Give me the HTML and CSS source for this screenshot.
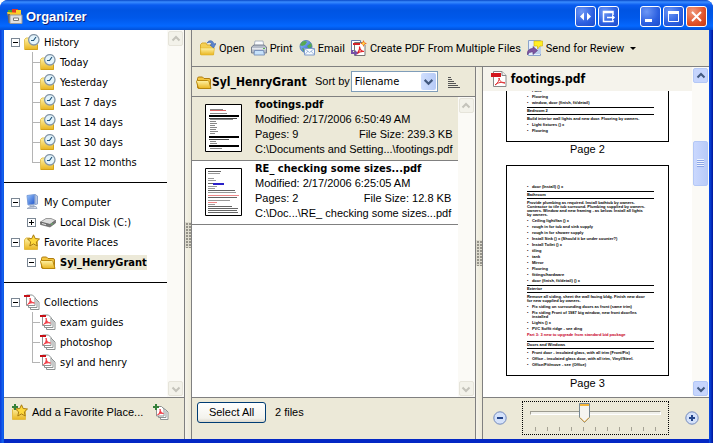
FILE: index.html
```html
<!DOCTYPE html>
<html lang="en">
<head>
<meta charset="utf-8">
<title>Organizer</title>
<link rel="stylesheet" href="styles.css">
</head>
<body>
<svg class="defs" aria-hidden="true">
  <defs>
    <linearGradient id="gold" x1="0" y1="0" x2="0" y2="1"><stop offset="0" stop-color="#fff3a6"/><stop offset="1" stop-color="#e9b520"/></linearGradient>
    <linearGradient id="blue" x1="0" y1="0" x2="1" y2="1"><stop offset="0" stop-color="#9cc8ff"/><stop offset="1" stop-color="#1c50c8"/></linearGradient>
  </defs>
  <symbol id="i-history" viewBox="0 0 16 16">
    <path d="M0.500 15.500V5.500L2 4h4l1 2h6.500v9.500z" fill="url(#gold)" stroke="#e6c455"/>
    <path d="M1 15.500h12.500V11" fill="none" stroke="#d2a21c"/>
    <circle cx="9.800" cy="5.800" r="5.200" fill="#e4f4fc" stroke="#8496a8" stroke-width="1.300"/>
    <path d="M12 3L9.500 6.500H7" fill="none" stroke="#24567c" stroke-width="1.200"/>
  </symbol>
  <symbol id="i-folder" viewBox="0 0 16 16">
    <path d="M1.500 13V4.500Q1.500 3 3 3H6.500L8 4.500H13Q14.500 4.500 14.500 6V13Q14.500 14.500 13 14.500H3Q1.500 14.500 1.500 13z" fill="#f4c63e" stroke="#b07d10"/>
    <path d="M0.500 7.500Q0.500 6.500 1.500 6.500H11.500Q12.500 6.500 13 7.500L15 14.500H4Q2.500 14.500 2 13z" fill="url(#gold)" stroke="#b8860b"/>
  </symbol>
  <symbol id="i-star" viewBox="0 0 16 16">
    <path d="M0.500 15.500V6L2 4h4l1 2h6.500v9.500z" fill="url(#gold)" stroke="#e2bb45"/>
    <path d="M9.500 0.800L11.200 4.500L15.500 5L12.300 7.900L13.200 12L9.500 9.900L5.800 12L6.700 7.900L3.500 5L7.800 4.500z" fill="#ffd93b" stroke="#a87b10"/>
  </symbol>
  <symbol id="i-staradd" viewBox="0 0 16 16">
    <use href="#i-star"/><path d="M3 0v6M0 3h6" stroke="#35803a" stroke-width="2"/>
  </symbol>
  <symbol id="i-computer" viewBox="0 0 16 16">
    <path d="M3 1.500L11 0.500V10L4 11z" fill="url(#blue)" stroke="#7b9fdb"/>
    <path d="M11 0.500L13.500 2V10L11 10.500z" fill="#b8c8e4" stroke="#8ba2cc"/>
    <path d="M6 11h4v2H6zM3 14.500L7 12.500H12L13 14.500z" fill="#dde2ec" stroke="#92a1bb" stroke-width=".8"/>
  </symbol>
  <symbol id="i-disk" viewBox="0 0 16 16">
    <path d="M0.500 8L6 4.500H11L15.500 6.500L10 10.500z" fill="#dcdcdc" stroke="#999"/>
    <path d="M0.500 8L10 10.500L15.500 6.500V9L10 13L0.500 10.500z" fill="#777" stroke="#555" stroke-width=".6"/>
    <path d="M2 9.500L6 10.700" stroke="#ddd"/><circle cx="12" cy="10" r=".8" fill="#68d168"/>
  </symbol>
  <symbol id="i-pdf" viewBox="0 0 16 16">
    <path d="M2.500 0.500H11L15 4.500V15.500H2.500z" fill="#fff" stroke="#888"/>
    <path d="M11 .500V4.500H15" fill="#eee" stroke="#888"/>
    <path d="M0 2h10v4H0z" fill="#d3161d"/>
    <path d="M4 14C7 12 8.500 9 8 7C9 11 11 12 14 12C11 10.500 7 11.500 4 14z" fill="none" stroke="#df2e31"/>
  </symbol>
  <symbol id="i-stack" viewBox="0 0 16 16">
    <path d="M6.500 5.500h6l2.500 2.500v7.500H6.500z" fill="#fff" stroke="#8d9292"/>
    <path d="M4.500 3.500h6l2.500 2.500v7.500H4.500z" fill="#fff" stroke="#8d9292"/>
    <path d="M2.500 1h6L11 3.500v8H2.500z" fill="#fff" stroke="#8d9292"/>
    <path d="M0 1h6v2H0z" fill="#c70f16"/>
    <path d="M3.500 10.500C6 8.500 6.500 6 6 4C6.500 7.500 8 8.500 10.500 9C8 8.500 5.500 9 3.500 10.500z" fill="#ef3c46" stroke="#ef3c46" stroke-width=".9"/>
  </symbol>
  <symbol id="i-stackadd" viewBox="0 0 16 16">
    <path d="M7.500 5.500h5l2.500 2.500v7.500H7.500z" fill="#fff" stroke="#8d9292"/>
    <path d="M5.500 4h5l2.500 2.500v7H5.500z" fill="#fff" stroke="#8d9292"/>
    <path d="M3.500 2.500h5l2.500 2.500v7H3.500z" fill="#fff" stroke="#8d9292"/>
    <path d="M4.500 11C7 9 7.300 7 7 5C7.500 8 8.500 9 10.500 9.500C8.500 9 6.500 9.500 4.500 11z" fill="#ef3c46" stroke="#ef3c46" stroke-width=".9"/>
    <path d="M3 0v6M0 3h6" stroke="#35803a" stroke-width="2"/>
  </symbol>
  <symbol id="i-open" viewBox="0 0 16 16">
    <path d="M0.500 14.500V4.500L2 3h4l1 2h6.500v9.500z" fill="#f4cf52" stroke="#d8ac30"/>
    <path d="M0.500 8H14.500L13.500 15H1z" fill="url(#gold)" stroke="#e1b52c" stroke-width=".6"/>
    <path d="M7 3C9-.500 13 0 14 4L16 3.500L13.500 8L10 5L12 4.500C11 2 9 2 7 3z" fill="#5c85d0" stroke="#3b62aa" stroke-width=".6"/>
  </symbol>
  <symbol id="i-print" viewBox="0 0 16 16">
    <path d="M4 1h8l1 6H3z" fill="#fafcff" stroke="#9aa4b4" stroke-width=".8"/>
    <path d="M.500 7L3 5H13L15.500 7V13H.500z" fill="#b5bcc9" stroke="#6d7687" stroke-width=".9"/>
    <path d="M1 8h14v1.500H1z" fill="#e3e7ee"/>
    <path d="M3.500 10.500h9l1 4.500H3z" fill="#c7e2fb" stroke="#6783b2" stroke-width=".8"/>
    <path d="M12 8.500h2" stroke="#59b44a"/>
  </symbol>
  <symbol id="i-email" viewBox="0 0 16 16">
    <circle cx="7" cy="6.500" r="6" fill="url(#blue)" stroke="#5c84b8"/>
    <path d="M3 2Q6 0 8 2L6 5L3 6L1 5zM8 6L12 3L13 6L10 9zM3 8L6 9L5 12z" fill="#58a951"/>
    <path d="M5.500 8.500h10v6.500H5.500z" fill="#f7fbff" stroke="#7f9ccb"/>
    <path d="M5.500 8.500l5 4l5-4M5.500 15l3.500-4M15.500 15l-3.500-4" fill="none" stroke="#8ea8d2" stroke-width=".8"/>
  </symbol>
  <symbol id="i-create" viewBox="0 0 16 16">
    <path d="M.500 .500h9v10H.500z" fill="#fff" stroke="#657bb0"/>
    <path d="M3.500 2.500h8.500l2 2.500v10.500H3.500z" fill="#fff" stroke="#777"/>
    <path d="M2 3h7v2H2z" fill="#d2242a"/>
    <path d="M5.500 14C8 11.500 9 9 8.500 6.500C9 10 11 11.500 13 11.500C10 11 8 12 5.500 14z" fill="none" stroke="#e1262b" stroke-width="1.200"/>
    <path d="M0 10h2v2h2V10l3 3l-3 3v-2H0z" fill="#7650a8"/>
    <path d="M12.500 0l1 2.300L16 3.500l-2.500 1L12.500 7l-1-2.500L9 3.500l2.500-1.200z" fill="#f26b21"/><circle cx="12.500" cy="3.500" r="1.200" fill="#ffe04a"/>
  </symbol>
  <symbol id="i-review" viewBox="0 0 16 16">
    <path d="M1.500 .500h12v15h-12z" fill="#e5eefa" stroke="#8aa3cc"/>
    <path d="M9 10L14 5V14H5z" fill="#b9cdec"/>
    <path d="M7 1h8.500v5H13l-2.500 3V6H7z" fill="#ffee24" stroke="#d9b90c" stroke-width=".7"/>
    <path d="M0 15C0 10 3 8.500 6 8.500V6.500l4.500 4L6 14.500v-2.500C3.500 12 1.500 12.500 0 15z" fill="#7d55a0" stroke="#5d3b82" stroke-width=".6"/>
  </symbol>
  <symbol id="i-app" viewBox="0 0 16 16">
    <path d="M1 1h5v5H1z" fill="#3aa13d"/><path d="M5 0h6v5H5z" fill="#e33a23"/><path d="M9 1h5v5H9z" fill="#f8d52b"/>
    <path d="M0 3l14 1-1 3H1z" fill="#ffc928"/>
    <path d="M.500 5H3V14H1.500z" fill="#666"/>
    <path d="M3 6h12v8.500H3z" fill="#dfe0e1" stroke="#999"/>
    <path d="M6.500 9h5v2.500h-5z" fill="#fff" stroke="#777"/>
  </symbol>
  <symbol id="i-up" viewBox="0 0 10 10"><path d="M1.500 6.500L5 3L8.500 6.500" fill="none" stroke="currentColor" stroke-width="2"/></symbol>
  <symbol id="i-down" viewBox="0 0 10 10"><path d="M1.500 3.500L5 7L8.500 3.500" fill="none" stroke="currentColor" stroke-width="2"/></symbol>
</svg>

<div class="window">
  <header class="titlebar">
    <svg class="icon"><use href="#i-app"/></svg>
    <h1>Organizer</h1>
    <div class="winbtns">
      <button aria-label="Dock"><svg viewBox="0 0 19 19"><path d="M8 5.500v8L4 9.500zM11 5.500v8l4-4z" fill="#fff"/></svg></button>
      <button aria-label="Detach"><svg viewBox="0 0 19 19"><path d="M14 8V4.500H4.500v10H14V13M4 5.500h10.500M8 10.500h7" fill="none" stroke="#fff" stroke-width="1.500"/><path d="M13 7.500l3 3-3 3z" fill="#fff"/></svg></button>
    </div>
    <div class="winbtns">
      <button aria-label="Minimize"><svg viewBox="0 0 19 19"><path d="M4 12h7v3H4z" fill="#fff"/></svg></button>
      <button aria-label="Maximize"><svg viewBox="0 0 19 19"><path d="M4.500 5h10v9.500h-10z" fill="none" stroke="#fff"/><path d="M4 4h11v3H4z" fill="#fff"/></svg></button>
      <button class="close" aria-label="Close"><svg viewBox="0 0 19 19"><path d="M5 5l9 9M14 5l-9 9" stroke="#fff" stroke-width="2"/></svg></button>
    </div>
  </header>

  <div class="content">
    <aside class="sidebar">
      <div class="scrollpane">
        <nav class="tree">
          <section>
            <div class="row"><button class="toggle" aria-label="Collapse History"></button><svg class="icon"><use href="#i-history"/></svg><span>History</span></div>
            <ul class="lined">
              <li class="row"><svg class="icon"><use href="#i-history"/></svg><span>Today</span></li>
              <li class="row"><svg class="icon"><use href="#i-history"/></svg><span>Yesterday</span></li>
              <li class="row"><svg class="icon"><use href="#i-history"/></svg><span>Last 7 days</span></li>
              <li class="row"><svg class="icon"><use href="#i-history"/></svg><span>Last 14 days</span></li>
              <li class="row"><svg class="icon"><use href="#i-history"/></svg><span>Last 30 days</span></li>
              <li class="row"><svg class="icon"><use href="#i-history"/></svg><span>Last 12 months</span></li>
            </ul>
          </section>
          <section>
            <div class="row"><button class="toggle" aria-label="Collapse My Computer"></button><svg class="icon"><use href="#i-computer"/></svg><span>My Computer</span></div>
            <ul>
              <li class="row"><button class="toggle plus" aria-label="Expand Local Disk"></button><svg class="icon"><use href="#i-disk"/></svg><span>Local Disk (C:)</span></li>
            </ul>
            <div class="row"><button class="toggle" aria-label="Collapse Favorite Places"></button><svg class="icon"><use href="#i-star"/></svg><span>Favorite Places</span></div>
            <ul>
              <li class="row"><button class="toggle" aria-label="Collapse Syl_HenryGrant"></button><svg class="icon"><use href="#i-folder"/></svg><span class="current">Syl_HenryGrant</span></li>
            </ul>
          </section>
          <section>
            <div class="row"><button class="toggle" aria-label="Collapse Collections"></button><svg class="icon"><use href="#i-stack"/></svg><span>Collections</span></div>
            <ul class="lined">
              <li class="row"><svg class="icon"><use href="#i-stack"/></svg><span>exam guides</span></li>
              <li class="row"><svg class="icon"><use href="#i-stack"/></svg><span>photoshop</span></li>
              <li class="row"><svg class="icon"><use href="#i-stack"/></svg><span>syl and henry</span></li>
            </ul>
          </section>
        </nav>
        <div class="scrollbar">
          <button disabled aria-label="Scroll up"><svg><use href="#i-up"/></svg></button>
          <button disabled aria-label="Scroll down"><svg><use href="#i-down"/></svg></button>
        </div>
      </div>
      <footer class="sidefoot">
        <button class="tool"><svg class="icon"><use href="#i-staradd"/></svg>Add a Favorite Place...</button>
        <button class="tool" aria-label="Add collection"><svg class="icon"><use href="#i-stackadd"/></svg></button>
      </footer>
    </aside>
    <div class="splitter"><i></i></div>

    <main class="main">
      <div class="toolbar">
        <button class="tool"><svg class="icon"><use href="#i-open"/></svg>Open</button>
        <button class="tool"><svg class="icon"><use href="#i-print"/></svg>Print</button>
        <button class="tool"><svg class="icon"><use href="#i-email"/></svg>Email</button>
        <button class="tool"><svg class="icon"><use href="#i-create"/></svg>Create PDF From Multiple Files</button>
        <button class="tool"><svg class="icon"><use href="#i-review"/></svg>Send for Review<span class="caret"></span></button>
      </div>
      <div class="panes">
        <section class="files">
          <div class="fileshead">
            <svg class="icon"><use href="#i-folder"/></svg>
            <h2>Syl_HenryGrant</h2>
            <label for="sort">Sort by</label>
            <span class="combo">
              <select id="sort"><option>Filename</option></select>
              <svg><use href="#i-down"/></svg>
            </span>
            <button class="order" aria-label="Sort order"><svg viewBox="0 0 12 12"><path d="M0 1.500h3M0 3.500h4M0 5.500h6M0 7.500h8M0 9.500h10M0 11.500h12" stroke="#555" fill="none"/></svg></button>
          </div>
          <div class="scrollpane">
            <ul class="list">
              <li class="file selected">
                <svg class="thumb" viewBox="0 0 37 48">
                  <path d="M.500 .500h36v47H.500z" fill="#fff" stroke="#000"/>
                  <path d="M5 5.500h13M5 9.500h17M5 15.500h23M5 17.500h6M5 19.500h7M5 21.500h5M5 23.500h7M5 25.500h6M5 27.500h8M5 29.500h5M5 35.500h17M5 37.500h6M5 39.500h7M5 44.500h12" stroke="#888"/>
                  <path d="M5 6.500h16" stroke="#d66"/>
                  <path d="M4 12h30M4 33h30M4 42h30" stroke="#000" stroke-width="2"/>
                  <path d="M4 14.500h28M4 35.500h20" stroke="#444"/>
                </svg>
                <div class="info">
                  <h3>footings.pdf</h3>
                  <p>Modified: 2/17/2006 6:50:49 AM</p>
                  <p class="split"><span>Pages: 9</span><span>File Size: 239.3 KB</span></p>
                  <p>C:\Documents and Setting...\footings.pdf</p>
                </div>
              </li>
              <li class="file">
                <svg class="thumb" viewBox="0 0 37 48">
                  <path d="M.500 .500h36v47H.500z" fill="#fff" stroke="#000"/>
                  <path d="M3 5.500h12M3 10.500h6M3 12.500h8M3 18.500h9M3 20.500h7M3 24.500h28M3 32.500h22M3 36.500h7" stroke="#999"/>
                  <path d="M3 3.500h13M3 15.500h9M3 22.500h27M3 29.500h29M3 38.500h24M3 40.500h30M3 42.500h29M3 44.500h30" stroke="#666"/>
                  <path d="M3 27.500h31M3 34.500h9" stroke="#e88"/>
                  <path d="M8 16h11" stroke="#2a20c8" stroke-width="2"/>
                </svg>
                <div class="info">
                  <h3>RE_ checking some sizes...pdf</h3>
                  <p>Modified: 2/17/2006 6:25:05 AM</p>
                  <p class="split"><span>Pages: 2</span><span>File Size: 12.8 KB</span></p>
                  <p>C:\Doc...\RE_ checking some sizes...pdf</p>
                </div>
              </li>
            </ul>
            <div class="scrollbar">
              <button disabled aria-label="Scroll up"><svg><use href="#i-up"/></svg></button>
              <button disabled aria-label="Scroll down"><svg><use href="#i-down"/></svg></button>
            </div>
          </div>
          <footer class="filesfoot"><button class="push">Select All</button><span>2 files</span></footer>
        </section>
        <div class="splitter"><i></i></div>
        <section class="preview">
          <div class="scrollpane">
            <div class="viewer">
              <div class="viewhead"><svg class="icon"><use href="#i-pdf"/></svg><h2>footings.pdf</h2></div>
              <div class="pages">
                <article class="page first">
                  <ul><li>Paint</li><li>Flooring</li><li>window, door (finish, fit/detail)</li></ul>
                  <h4>Bedroom 2</h4>
                  <p>Build interior wall lights and new door. Flooring by owners.</p>
                  <ul><li>Light fixtures () x</li><li>Flooring</li></ul>
                </article>
                <p class="pagelabel">Page 2</p>
                <article class="page">
                  <ul><li>door (Install) () x</li></ul>
                  <h4>Bathroom</h4>
                  <p>Provide plumbing as required. Install bathtub by owners.<br>Contractor to tile tub surround. Plumbing supplied by owners.<br>owners. Window and new framing - as below. Install all lights<br>by owners.</p>
                  <ul><li>Ceiling light/fan () x</li><li>rough in for tub and sink supply</li><li>rough in for shower supply</li><li>Install Sink () x (Should it be under counter?)</li><li>Install Toilet () x</li><li>tiling</li><li>tank</li><li>Mirror</li><li>Flooring</li><li>fittings/hardware</li><li>door (finish, fit/detail) () x</li></ul>
                  <h4>Exterior</h4>
                  <p>Remove all siding, sheet the wall facing bldg. Finish new door<br>for new supplied by owners.</p>
                  <ul><li>Fix siding on surrounding doors as front (same trim)</li><li>Fix siding Front of 1987 big window, new front door/Ins<br>installed</li><li>Lights () x</li><li>PVC Soffit ridge - see ding</li></ul>
                  <p class="red">Part 3: 3 new to upgrade from standard bid package</p>
                  <h4>Doors and Windows</h4>
                  <ul><li>Front door - insulated glass, with all trim (Front/Fix)</li><li>Office - insulated glass door, with all trim, Vinyl/Steel.</li><li>Office/Fit/move - see (Office)</li></ul>
                </article>
                <p class="pagelabel">Page 3</p>
              </div>
            </div>
            <div class="scrollbar active">
              <button aria-label="Scroll up"><svg><use href="#i-up"/></svg></button>
              <span class="grip"></span>
              <button aria-label="Scroll down"><svg><use href="#i-down"/></svg></button>
            </div>
          </div>
          <footer class="zoombar">
            <button class="round" aria-label="Zoom out"><svg viewBox="0 0 14 14"><circle cx="7" cy="7" r="6.200" fill="#d5e2fa" stroke="#7289bd"/><path d="M4 7h6" stroke="#24468c" stroke-width="2"/></svg></button>
            <div class="slider">
              <input type="range" min="0" max="10" value="4" aria-label="Thumbnail size">
              <div class="ticks"><i></i><i></i><i></i><i></i><i></i><i></i><i></i><i></i><i></i><i></i><i></i></div>
            </div>
            <button class="round" aria-label="Zoom in"><svg viewBox="0 0 14 14"><circle cx="7" cy="7" r="6.200" fill="#d5e2fa" stroke="#7289bd"/><path d="M4 7h6M7 4v6" stroke="#24468c" stroke-width="2"/></svg></button>
          </footer>
        </section>
      </div>
    </main>
  </div>
</div>
</body>
</html>
```
FILE: styles.css
```css
* { box-sizing: border-box; margin: 0; padding: 0; }

:root {
  --face: #ece9d8;
  --line: #808080;
  --tahoma: "DejaVu Sans Condensed", "DejaVu Sans", sans-serif;
  --arial: "Liberation Sans", Arial, sans-serif;
}

body { font: 11px/15px var(--arial); color: #000; background: #fff; }
button { font: inherit; color: inherit; background: none; border: 0; }
ul { list-style: none; }
.defs { position: absolute; width: 0; height: 0; }
.icon { width: 16px; height: 16px; flex: none; }

.window {
  display: flex;
  flex-direction: column;
  height: 100vh;
  border-radius: 8px 8px 0 0;
  overflow: hidden;
  background: linear-gradient(90deg, #0a38d8, #1468f0 3px, #0a4be0 4px calc(100% - 4px), #0842d8 calc(100% - 3px), #00149a);
}

.titlebar {
  display: flex;
  align-items: center;
  flex: none;
  height: 30px;
  padding: 3px 6px 0 7px;
  background: linear-gradient(#0848c8, #3a8cff 2px, #0a5cf0 5px, #0054e3 10px, #0058ea 18px, #0468ff 26px, #0150d8);
}
.titlebar h1 {
  flex: 1;
  margin-left: 3px;
  font: bold 13px/20px var(--arial);
  color: #fff;
  text-shadow: 1px 1px 0 #0a1e78;
}
.winbtns { display: flex; gap: 2px; }
.winbtns + .winbtns { margin-left: 21px; }
.winbtns button {
  width: 21px;
  height: 21px;
  border: 1px solid #fff;
  border-radius: 3px;
  background: radial-gradient(circle at 30% 25%, #6d97f5, #2b5fe0 60%, #1b4ccb);
}
.winbtns .close { background: radial-gradient(circle at 30% 25%, #f09a7c, #df5129 60%, #c63a12); }
.winbtns svg { display: block; width: 19px; height: 19px; }

.content {
  display: flex;
  flex: 1;
  min-height: 0;
  margin: 0 4px;
  border-bottom: 4px solid #0428c4;
  background: var(--face);
}
.sidebar { display: flex; flex-direction: column; width: 181px; border-right: 1px solid var(--line); }
.scrollpane { display: flex; flex: 1; min-height: 0; background: #fff; }

.tree { flex: 1; padding-top: 2px; font-family: var(--tahoma); }
.tree section { padding-bottom: 10px; }
.tree section + section { padding-top: 9px; border-top: 1px solid #000; }
.row { display: flex; align-items: center; height: 20px; padding-left: 7px; white-space: nowrap; }
.row .icon { margin-right: 4px; }
.tree ul .row { padding-left: 23px; }
.lined .row {
  background:
    linear-gradient(#b4b4b4, #b4b4b4) 28px 0 / 1px 100% no-repeat,
    linear-gradient(#b4b4b4, #b4b4b4) 28px 10px / 8px 1px no-repeat;
}
.tree .lined .row { padding-left: 36px; }
.tree .lined .row:last-child { background-size: 1px 10px, 8px 1px; }
.toggle {
  flex: none;
  width: 9px;
  height: 9px;
  margin-right: 4px;
  border: 1px solid #7b8794;
  background: linear-gradient(#000, #000) center / 5px 1px no-repeat #fff;
}
.toggle.plus {
  background:
    linear-gradient(#000, #000) center / 5px 1px no-repeat,
    linear-gradient(#000, #000) center / 1px 5px no-repeat #fff;
}
.current { font-weight: bold; background: var(--face); }

.scrollbar {
  display: flex;
  flex-direction: column;
  justify-content: space-between;
  flex: none;
  width: 17px;
  padding: 1px;
  background: #fbfaf6;
}
.scrollbar button {
  display: grid;
  place-items: center;
  width: 15px;
  height: 15px;
  border: 1px solid #e6e4da;
  border-radius: 2px;
  background: #f3f2ea;
  color: #c4c3bb;
}
.scrollbar svg { width: 10px; height: 10px; }
.scrollbar.active button, .grip { border: 1px solid #b4c8f6; background: #c6d5fd; color: #42597f; }
.scrollbar .grip {
  width: 15px;
  height: 45px;
  margin-bottom: 138px;
  border-radius: 2px;
  background:
    repeating-linear-gradient(#eef4fe 0 1px, #8ca5e6 1px 2px) center / 7px 8px no-repeat,
    linear-gradient(90deg, #cad8fe, #b9cbf8);
}

.sidefoot, .filesfoot, .zoombar { flex: none; height: 42px; border-top: 1px solid var(--line); }
.sidefoot { display: flex; justify-content: space-between; align-items: flex-start; padding: 6px 15px 0 8px; }
.tool { display: flex; align-items: center; gap: 4px; white-space: nowrap; }

.splitter {
  display: flex;
  align-items: center;
  flex: none;
  width: 7px;
  border-right: 1px solid var(--line);
  background: linear-gradient(90deg, #f4f2e8, #ece9d8);
}
.splitter i {
  width: 6px;
  height: 26px;
  background: radial-gradient(circle at 2px 2px, #96948a 0 1px, transparent 1px) 0 0 / 3px 3px, #dedbce;
}

.main { display: flex; flex-direction: column; flex: 1; min-width: 0; }
.toolbar { display: flex; align-items: center; flex: none; gap: 6px; height: 36px; padding: 0 8px; font-family: Roboto, sans-serif; }
.toolbar .tool { gap: 3px; }
.caret { border: 3px solid transparent; border-top-color: #000; border-bottom: 0; margin-left: 3px; }
.panes { display: flex; flex: 1; min-height: 0; border-top: 1px solid var(--line); }

.files { display: flex; flex-direction: column; flex: 5; min-width: 0; border-right: 1px solid var(--line); }
.fileshead { display: flex; align-items: center; flex: none; height: 30px; padding: 0 15px 0 4px; border-bottom: 1px solid var(--line); }
.fileshead h2 { flex: 1; min-width: 0; overflow: hidden; font: bold 12px/18px var(--tahoma); }
.fileshead label { margin: 0 1px 0 7px; }
.combo { display: flex; position: relative; width: 87px; }
.combo select {
  appearance: none;
  width: 100%;
  height: 21px;
  padding-left: 3px;
  border: 1px solid #7f9db9;
  border-radius: 0;
  background: #fff;
  color: #000;
  font: 11px/15px var(--tahoma);
}
.combo svg {
  position: absolute;
  top: 2px;
  right: 2px;
  width: 15px;
  height: 17px;
  padding: 2px;
  border-radius: 2px;
  background: linear-gradient(90deg, #d0dffe, #b6caf7);
  color: #42597f;
  pointer-events: none;
}
.order { width: 12px; height: 12px; margin-left: 10px; }
.order svg { display: block; width: 12px; height: 12px; }

.list { flex: 1; min-width: 0; }
.file { display: flex; gap: 13px; height: 64px; padding: 0 9px 3px 13px; border-bottom: 1px solid var(--line); }
.selected { background: var(--face); }
.thumb { flex: none; width: 37px; height: 48px; margin-top: 7px; }
.info { flex: 1; white-space: nowrap; }
.info h3 { font: bold 11px/15px var(--tahoma); }
.split { display: flex; justify-content: space-between; }
.filesfoot { display: flex; align-items: flex-start; gap: 9px; padding: 4px 5px; line-height: 21px; }
.push {
  width: 69px;
  height: 21px;
  border: 1px solid #003c74;
  border-radius: 3px;
  background: linear-gradient(#fff, #f3f2ec 80%, #dcd8cc);
  line-height: 15px;
}

.preview { display: flex; flex-direction: column; flex: 4; min-width: 0; }
.viewer { display: flex; flex-direction: column; flex: 1; min-width: 0; }
.viewhead { display: flex; align-items: center; gap: 4px; flex: none; height: 24px; padding-left: 8px; background: #f5f3ec; }
.viewhead h2 { font: bold 12px/18px var(--tahoma); }
.pages {
  display: flex;
  flex-direction: column;
  justify-content: flex-end;
  align-items: center;
  flex: 1;
  min-height: 0;
  overflow: hidden;
  padding-bottom: 6px;
}
.page {
  width: 163px;
  flex: none;
  padding: 19px 14px 6px 20px;
  border: 1px solid #000;
  background: #fff;
  font: bold 4px/4px var(--arial);
  white-space: nowrap;
}
.page.first { padding-top: 0; border-top: 0; }
.page li { padding-left: 5px; margin-bottom: 2px; text-indent: -5px; }
.page li::before { content: "•"; display: inline-block; width: 5px; text-indent: 0; font-weight: normal; }
.page h4 { margin: 1px 0 2px; padding: 1px 0; border: solid #000; border-width: 1px 0; font: inherit; }
.page p { margin-bottom: 2px; }
.page .red { margin-bottom: 4px; color: #c8001e; }
.pagelabel { flex: none; line-height: 15px; }
.pagelabel + .page { margin-top: 8px; }

.zoombar { display: flex; justify-content: space-between; align-items: flex-start; padding: 3px 10px; }
.round { width: 14px; height: 14px; margin-top: 10px; }
.round svg { display: block; }
.slider { width: 147px; height: 34px; padding: 0 7px; border: 1px dotted #000; }
.slider input { display: block; appearance: none; width: 131px; height: 22px; background: none; }
.slider input::-webkit-slider-runnable-track {
  height: 4px;
  border: 1px solid #fff;
  border-top-color: #9d9c90;
  border-left-color: #9d9c90;
  background: #f0f0ea;
}
.slider input::-webkit-slider-thumb {
  appearance: none;
  width: 11px;
  height: 20px;
  margin-top: -9px;
  background: url("data:image/svg+xml,%3Csvg xmlns='http://www.w3.org/2000/svg' viewBox='0 0 11 20'%3E%3Cpath d='M.5.5h10v14l-5 5-5-5z' fill='%23f6f5f0' stroke='%23778892'/%3E%3Cpath d='M1 1h9v2H1z' fill='%23f5b53a'/%3E%3Cpath d='M1 14.500l4.500 4.500 4.500-4.500' fill='none' stroke='%23e8a83a'/%3E%3C/svg%3E");
}
.ticks { display: flex; justify-content: space-between; padding: 3px 5px 0; }
.ticks i { width: 1px; height: 4px; background: #a5a294; }
```
